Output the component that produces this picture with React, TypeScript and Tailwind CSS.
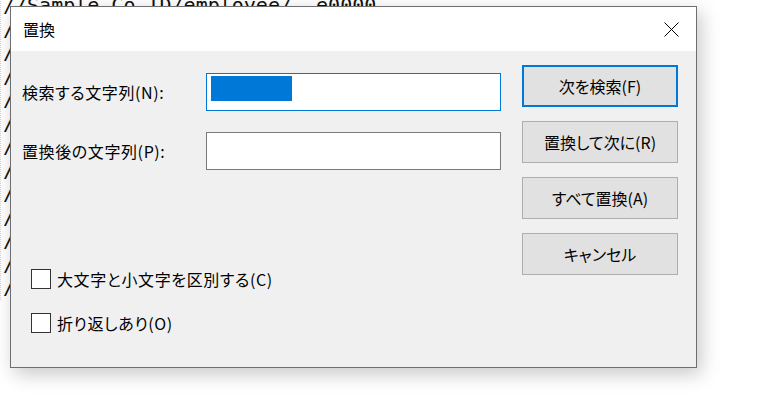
import React from 'react';

const jp = "font-['Noto_Sans_CJK_JP','Noto_Sans',sans-serif] [font-feature-settings:'palt']";

const editorLines = Array.from({ length: 12 }, (_, i) => i);

const FindButton: React.FC<{ label: string; primary?: boolean }> = ({ label, primary }) => (
  <button
    className={
      primary
        ? 'h-[42px] w-full bg-[#e1e1e1] border-2 border-[#0078d7] text-[16px] text-black'
        : 'h-[42px] w-full bg-[#e1e1e1] border border-[#adadad] text-[16px] text-black'
    }
  >
    {label}
  </button>
);

const CheckRow: React.FC<{ label: string }> = ({ label }) => (
  <label className="flex items-center gap-[6px] h-[20px]">
    <span className="w-[20px] h-[20px] bg-white border border-[#333333]" />
    <span className="text-[16px] tracking-[0.6px] text-black">{label}</span>
  </label>
);

const App: React.FC = () => {
  return (
    <div className={`relative w-[763px] h-[403px] bg-white overflow-hidden ${jp}`}>
      {/* editor behind the dialog */}
      <div className="-mt-[6px] pl-[2px] border-l border-dotted border-[#9ee8ee] font-['DejaVu_Sans_Mono',monospace] text-[20px] leading-[23.5px] text-[#111111] whitespace-pre">
        <div>{'//Sample_Co_ID/employee/  e0000'}</div>
        {editorLines.map((i) => (
          <div key={i}>{'//'}</div>
        ))}
      </div>

      {/* replace dialog */}
      <div className="absolute left-[10px] top-[6px] w-[687px] h-[362px] flex flex-col border border-[#6e6e6e] bg-[#f0f0f0] shadow-[4px_6px_18px_rgba(0,0,0,0.22)]">
        <div className="h-[44px] bg-white flex items-center justify-between pl-[12px] pr-[17px]">
          <span className="text-[16px] text-black">置換</span>
          <svg width="15" height="15" viewBox="0 0 15 15">
            <path d="M0.5 0.5 L14.5 14.5 M14.5 0.5 L0.5 14.5" stroke="#000" strokeWidth="1" fill="none" />
          </svg>
        </div>

        <div className="flex-1 flex">
          <div className="flex-1 flex flex-col pl-[11px] pt-[22px] pb-[34px]">
            <div className="flex items-center h-[38px]">
              <span className="w-[184px] text-[16px] tracking-[0.6px] text-black">検索する文字列(N):</span>
              <div className="w-[295px] h-[38px] bg-white border border-[#0078d7] pl-[4px] pt-[2px]">
                <div className="w-[81px] h-[25px] bg-[#0078d7]" />
              </div>
            </div>
            <div className="flex items-center h-[38px] mt-[21px]">
              <span className="w-[184px] text-[16px] tracking-[0.6px] text-black">置換後の文字列(P):</span>
              <div className="w-[295px] h-[38px] bg-white border border-[#7a7a7a]" />
            </div>
            <div className="mt-auto ml-[9px] flex flex-col gap-[24px]">
              <CheckRow label="大文字と小文字を区別する(C)" />
              <CheckRow label="折り返しあり(O)" />
            </div>
          </div>
          <div className="w-[156px] mr-[18px] ml-[21px] pt-[14px] flex flex-col gap-[14px]">
            <FindButton label="次を検索(F)" primary />
            <FindButton label="置換して次に(R)" />
            <FindButton label="すべて置換(A)" />
            <FindButton label="キャンセル" />
          </div>
        </div>
      </div>
    </div>
  );
};

export default App;
